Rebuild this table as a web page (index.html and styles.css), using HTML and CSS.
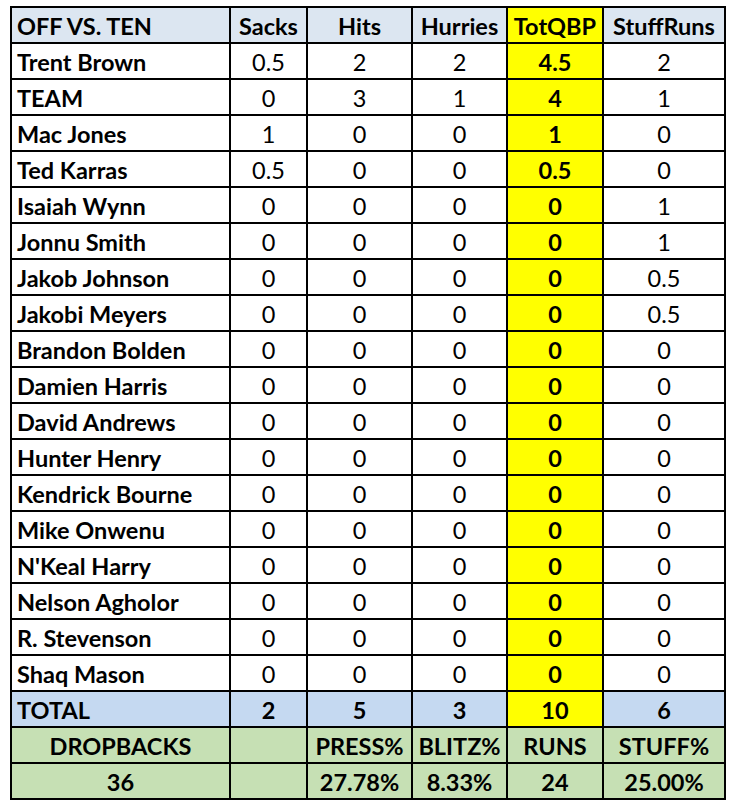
FILE: index.html
```html
<!DOCTYPE html>
<html>
<head>
<meta charset="utf-8">
<link rel="stylesheet" href="styles.css">
</head>
<body>
<table class="stats">
  <colgroup>
    <col class="c-name"><col class="c-sacks"><col class="c-hits"><col class="c-hur"><col class="c-tot"><col class="c-stuff">
  </colgroup>
  <thead>
    <tr class="head">
      <th class="name">OFF VS. TEN</th><th>Sacks</th><th>Hits</th><th>Hurries</th><th class="tot">TotQBP</th><th>StuffRuns</th>
    </tr>
  </thead>
  <tbody>
    <tr><td class="name">Trent Brown</td><td>0.5</td><td>2</td><td>2</td><td class="tot">4.5</td><td>2</td></tr>
    <tr><td class="name">TEAM</td><td>0</td><td>3</td><td>1</td><td class="tot">4</td><td>1</td></tr>
    <tr><td class="name">Mac Jones</td><td>1</td><td>0</td><td>0</td><td class="tot">1</td><td>0</td></tr>
    <tr><td class="name">Ted Karras</td><td>0.5</td><td>0</td><td>0</td><td class="tot">0.5</td><td>0</td></tr>
    <tr><td class="name">Isaiah Wynn</td><td>0</td><td>0</td><td>0</td><td class="tot">0</td><td>1</td></tr>
    <tr><td class="name">Jonnu Smith</td><td>0</td><td>0</td><td>0</td><td class="tot">0</td><td>1</td></tr>
    <tr><td class="name">Jakob Johnson</td><td>0</td><td>0</td><td>0</td><td class="tot">0</td><td>0.5</td></tr>
    <tr><td class="name">Jakobi Meyers</td><td>0</td><td>0</td><td>0</td><td class="tot">0</td><td>0.5</td></tr>
    <tr><td class="name">Brandon Bolden</td><td>0</td><td>0</td><td>0</td><td class="tot">0</td><td>0</td></tr>
    <tr><td class="name">Damien Harris</td><td>0</td><td>0</td><td>0</td><td class="tot">0</td><td>0</td></tr>
    <tr><td class="name">David Andrews</td><td>0</td><td>0</td><td>0</td><td class="tot">0</td><td>0</td></tr>
    <tr><td class="name">Hunter Henry</td><td>0</td><td>0</td><td>0</td><td class="tot">0</td><td>0</td></tr>
    <tr><td class="name">Kendrick Bourne</td><td>0</td><td>0</td><td>0</td><td class="tot">0</td><td>0</td></tr>
    <tr><td class="name">Mike Onwenu</td><td>0</td><td>0</td><td>0</td><td class="tot">0</td><td>0</td></tr>
    <tr><td class="name">N'Keal Harry</td><td>0</td><td>0</td><td>0</td><td class="tot">0</td><td>0</td></tr>
    <tr><td class="name">Nelson Agholor</td><td>0</td><td>0</td><td>0</td><td class="tot">0</td><td>0</td></tr>
    <tr><td class="name">R. Stevenson</td><td>0</td><td>0</td><td>0</td><td class="tot">0</td><td>0</td></tr>
    <tr><td class="name">Shaq Mason</td><td>0</td><td>0</td><td>0</td><td class="tot">0</td><td>0</td></tr>
    <tr class="total"><td class="name">TOTAL</td><td>2</td><td>5</td><td>3</td><td class="tot">10</td><td>6</td></tr>
    <tr class="green"><td>DROPBACKS</td><td></td><td>PRESS%</td><td>BLITZ%</td><td>RUNS</td><td>STUFF%</td></tr>
    <tr class="green"><td>36</td><td></td><td>27.78%</td><td>8.33%</td><td>24</td><td>25.00%</td></tr>
  </tbody>
</table>
</body>
</html>
```
FILE: styles.css
```css
html, body {
  margin: 0;
  padding: 0;
  background: #ffffff;
}
body {
  padding: 6px 0 0 10px;
}
.stats {
  border-collapse: collapse;
  table-layout: fixed;
  width: 714px;
  font-family: Lato, "Open Sans", sans-serif;
  font-size: 23.5px;
  color: #000;
}
.c-name { width: 219px; }
.c-sacks { width: 77px; }
.c-hits { width: 105px; }
.c-hur { width: 95px; }
.c-tot { width: 96px; }
.c-stuff { width: 122px; }
.stats th, .stats td {
  border: 2px solid #000;
  height: 32px;
  padding: 2px 3px 0;
  text-align: center;
  vertical-align: middle;
  font-weight: 400;
  white-space: nowrap;
  line-height: 32px;
  overflow: hidden;
}
.stats th {
  font-weight: 700;
}
.head th {
  background: #dce6f1;
}
.stats .name {
  text-align: left;
  font-weight: 700;
  padding-left: 5px;
}
.stats .tot {
  background: #ffff00;
  font-weight: 700;
}
.total td {
  background: #c5d9f1;
  font-weight: 700;
}
.total td.tot {
  background: #ffff00;
}
.green td {
  background: #c6e0b4;
  font-weight: 700;
}
```
